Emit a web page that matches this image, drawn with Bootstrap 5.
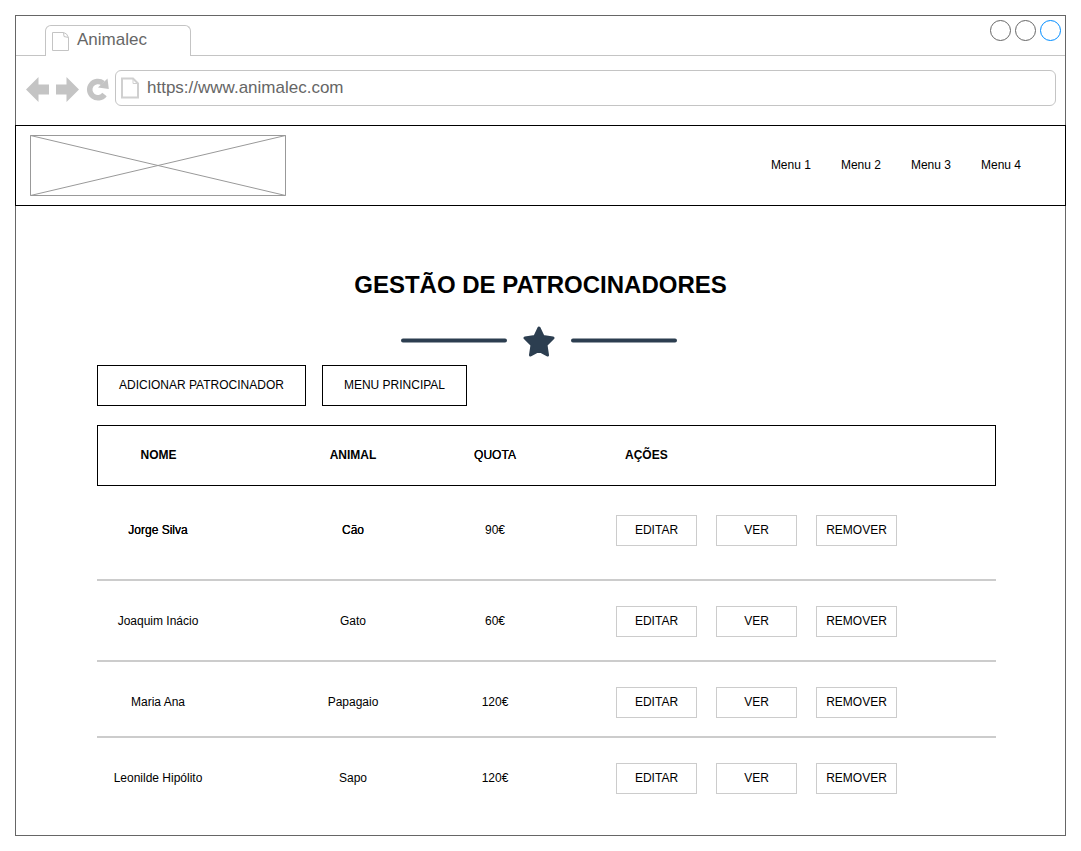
<!DOCTYPE html>
<html lang="pt">
<head>
<meta charset="utf-8">
<meta name="viewport" content="width=device-width, initial-scale=1">
<title>Animalec</title>
<link rel="stylesheet" href="https://cdn.jsdelivr.net/npm/bootstrap@5.3.0/dist/css/bootstrap.min.css">
<style>
  body { font-family: "Liberation Sans", Arial, sans-serif; font-size: 12px; line-height: 16px; color: #000; background: #fff; padding: 15px; }
  .window { border: 1px solid #666; }

  /* Browser chrome */
  .tab-strip { height: 40px; padding: 9px 4px 0 29px; border-bottom: 1px solid #c4c4c4; }
  .page-tab { width: 146px; height: 31px; padding: 0 6px; border: 1px solid #c4c4c4; border-bottom: 0; border-radius: 6px 6px 0 0; background: #fff; color: #666; font-size: 17px; line-height: 28px; }
  .window-dots { margin-top: -5px; gap: 4px; }
  .dot { width: 21px; height: 21px; padding: 0; border: 1px solid #666; border-radius: 50%; background: #fff; }
  .dot-active { border-color: #008cff; }
  .toolbar { padding: 14px 9px 19px 10px; }
  .tool { padding: 0; border: 0; background: none; line-height: 0; }
  .address { height: 36px; padding: 0 5px; border: 1px solid #c4c4c4; border-radius: 6px; }
  .address input { height: 34px; border: 0; padding: 0; color: #666; font-size: 17px; background: none; outline: 0; }

  /* Site header */
  .site-nav { margin: 0 -1px; padding: 9px 44px 9px 14px; border: 1px solid #000; }
  .site-nav .nav { gap: 30px; }
  .site-nav .nav-link { padding: 0 0 2px; color: #000; }

  /* Page content */
  .page-title { margin: 65px 0 27px; font-size: 24px; line-height: 28px; font-weight: 700; }
  .content { padding: 8px 69px 40px 81px; }
  .btn-box { --bs-btn-font-size: 12px; --bs-btn-line-height: 16px; --bs-btn-border-radius: 0; --bs-btn-color: #000; --bs-btn-bg: #fff; --bs-btn-hover-bg: #f2f2f2; }
  .btn-main { --bs-btn-border-color: #000; --bs-btn-hover-border-color: #000; --bs-btn-padding-x: 21px; --bs-btn-padding-y: 0; height: 41px; padding-bottom: 2px; }
  .btn-row { --bs-btn-border-color: #ccc; --bs-btn-hover-border-color: #999; --bs-btn-padding-x: 0; --bs-btn-padding-y: 0; width: 81px; height: 31px; padding-bottom: 2px; }
  .sponsors { width: 100%; margin-top: 19px; border-collapse: separate; border-spacing: 0; table-layout: fixed; }
  .col-name { width: 161px; }
  .col-animal { width: 190px; }
  .col-quota { width: 94px; }
  .sponsors th, .sponsors td { text-align: center; }
  .sponsors th:first-child, .sponsors td:first-child { padding-right: 40px; }
  .sponsors thead th { height: 61px; padding-bottom: 3px; border: 1px solid #000; border-width: 1px 0; }
  .sponsors thead th:first-child { border-left-width: 1px; }
  .sponsors thead th:last-child { border-right-width: 1px; padding-left: 83px; text-align: left; }
  .sponsors tbody td { height: 76px; padding-top: 32px; vertical-align: top; border-bottom: 2px solid #ccc; }
  .sponsors tbody td:last-child { padding-top: 25px; padding-left: 74px; }
  .sponsors .row-first td { height: 95px; padding-top: 36px; }
  .sponsors .row-first td:last-child { padding-top: 29px; }
  .sponsors .row-tall td { height: 81px; }
  .sponsors .row-last td { height: 56px; border-bottom: 0; }
  .strong-text { text-shadow: 0 0 0 #000; }
  .actions { gap: 19px; }
</style>
</head>
<body>
<div class="window">
  <header>
    <div class="tab-strip d-flex justify-content-between align-items-start">
      <div class="page-tab d-flex">
        <svg class="mt-1 me-2" width="17" height="23" viewBox="0 0 17 23" fill="none" stroke="#c4c4c4" aria-hidden="true"><path d="M.5 2.500H11.500Q15 3 16.500 7.500V20.500H.5ZM11.500 2.500 12 6.500 16.500 7.500"/></svg>
        <span>Animalec</span>
      </div>
      <div class="window-dots d-flex">
        <button type="button" class="dot" aria-label="Minimizar"></button>
        <button type="button" class="dot" aria-label="Maximizar"></button>
        <button type="button" class="dot dot-active" aria-label="Fechar"></button>
      </div>
    </div>
    <div class="toolbar d-flex align-items-center">
      <button type="button" class="tool" aria-label="Voltar"><svg width="30" height="36" viewBox="0 0 30 36" fill="#c4c4c4"><path d="M0 19.500 12.500 7V14.500H23V24.500H12.500V32Z"/></svg></button>
      <button type="button" class="tool" aria-label="Avançar"><svg width="30" height="36" viewBox="0 0 30 36" fill="#c4c4c4"><path d="M23 19.500 10.500 7V14.500H0V24.500H10.500V32Z"/></svg></button>
      <button type="button" class="tool" aria-label="Recarregar"><svg width="29" height="36" viewBox="0 0 29 36"><path d="M18.500 24.500A8.200 8.200 0 1 1 17 13.200" fill="none" stroke="#c4c4c4" stroke-width="5.500"/><path d="M21.500 8.500 22.800 19 12 17.500Z" fill="#c4c4c4"/></svg></button>
      <label class="address d-flex align-items-center flex-grow-1">
        <svg class="me-2 flex-shrink-0" width="18" height="22" viewBox="0 0 18 22" fill="none" stroke="#d0d0d0" stroke-width="2" aria-hidden="true"><path d="M1 1.500H12L17 6.500V20.500H1Z"/><path d="M12 2V6.500H16" stroke-width="1"/></svg>
        <input class="flex-grow-1" type="text" value="https://www.animalec.com" aria-label="Endereço">
      </label>
    </div>
  </header>

  <nav class="site-nav d-flex justify-content-between align-items-center">
    <svg width="256" height="61" viewBox="0 0 256 61" fill="none" stroke="#999" role="img" aria-label="Logótipo"><path d="M.5 .5H255.500V60.500H.5ZL255.500 60.500M255.500 .5 .5 60.500"/></svg>
    <ul class="nav">
      <li class="nav-item"><a class="nav-link" href="#">Menu 1</a></li>
      <li class="nav-item"><a class="nav-link" href="#">Menu 2</a></li>
      <li class="nav-item"><a class="nav-link" href="#">Menu 3</a></li>
      <li class="nav-item"><a class="nav-link" href="#">Menu 4</a></li>
    </ul>
  </nav>

  <div class="text-center">
    <h1 class="page-title">GESTÃO DE PATROCINADORES</h1>
    <svg class="d-block mx-auto" width="281" height="31" viewBox="0 0 281 31" aria-hidden="true">
      <path d="M3 14.500H105M173 14.500H275" stroke="#2c3e50" stroke-width="4" stroke-linecap="round"/>
      <path d="M139 2 143 10.500 153 12 146 19 147.500 29 139 24.500 130.500 29 132 19 125 12 135 10.500Z" fill="#2c3e50" stroke="#2c3e50" stroke-width="3" stroke-linejoin="round"/>
    </svg>
  </div>

  <main class="content">
    <div class="d-flex gap-3">
      <button type="button" class="btn btn-box btn-main">ADICIONAR PATROCINADOR</button>
      <button type="button" class="btn btn-box btn-main">MENU PRINCIPAL</button>
    </div>
    <table class="sponsors">
      <colgroup><col class="col-name"><col class="col-animal"><col class="col-quota"><col></colgroup>
      <thead>
        <tr><th scope="col">NOME</th><th scope="col">ANIMAL</th><th scope="col" class="fw-normal strong-text">QUOTA</th><th scope="col">AÇÕES</th></tr>
      </thead>
      <tbody>
        <tr class="row-first">
          <td class="strong-text">Jorge Silva</td><td class="strong-text">Cão</td><td>90€</td>
          <td><div class="actions d-flex"><button type="button" class="btn btn-box btn-row">EDITAR</button><button type="button" class="btn btn-box btn-row">VER</button><button type="button" class="btn btn-box btn-row">REMOVER</button></div></td>
        </tr>
        <tr class="row-tall">
          <td>Joaquim Inácio</td><td>Gato</td><td>60€</td>
          <td><div class="actions d-flex"><button type="button" class="btn btn-box btn-row">EDITAR</button><button type="button" class="btn btn-box btn-row">VER</button><button type="button" class="btn btn-box btn-row">REMOVER</button></div></td>
        </tr>
        <tr>
          <td>Maria Ana</td><td>Papagaio</td><td>120€</td>
          <td><div class="actions d-flex"><button type="button" class="btn btn-box btn-row">EDITAR</button><button type="button" class="btn btn-box btn-row">VER</button><button type="button" class="btn btn-box btn-row">REMOVER</button></div></td>
        </tr>
        <tr class="row-last">
          <td>Leonilde Hipólito</td><td>Sapo</td><td>120€</td>
          <td><div class="actions d-flex"><button type="button" class="btn btn-box btn-row">EDITAR</button><button type="button" class="btn btn-box btn-row">VER</button><button type="button" class="btn btn-box btn-row">REMOVER</button></div></td>
        </tr>
      </tbody>
    </table>
  </main>
</div>
<script src="https://cdn.jsdelivr.net/npm/bootstrap@5.3.0/dist/js/bootstrap.bundle.min.js"></script>
</body>
</html>
